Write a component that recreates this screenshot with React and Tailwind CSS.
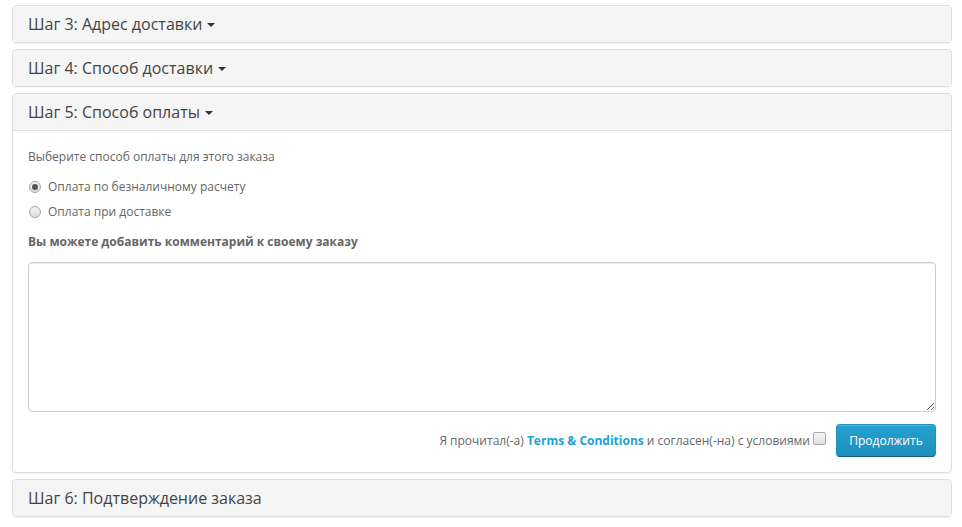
import React from 'react';

const Caret = () => (
  <span className="inline-block ml-[5px] align-middle w-0 h-0 border-t-[4px] border-t-[#333] border-x-[4px] border-x-transparent relative top-[-1px]" />
);

const PanelHead = ({ title, caret = true }) => (
  <div className="h-[36px] bg-[#f5f5f5] px-[15px] flex items-center rounded-t-[4px]">
    <h4 className="text-[16px] text-[#444] leading-[18px]">
      {title}
      {caret && <Caret />}
    </h4>
  </div>
);

const Radio = ({ checked, label }) => (
  <label className="flex items-center h-[20px] gap-[7px] pl-[1px]">
    <span className="w-[12px] h-[12px] rounded-full border border-[#a9a9a9] bg-gradient-to-b from-[#f4f4f4] to-[#dcdcdc] flex items-center justify-center">
      {checked && <span className="w-[6px] h-[6px] rounded-full bg-[#555]" />}
    </span>
    <span>{label}</span>
  </label>
);

export default function App() {
  return (
    <div className="w-[962px] h-[527px] bg-white pt-[5px] px-[12px] text-[12px] text-[#666] leading-[20px]" style={{ fontFamily: '"Open Sans", "Noto Sans", sans-serif' }}>
      <div className="w-[940px] flex flex-col gap-[6px]">
        <div className="border border-[#ddd] rounded-[4px] shadow-[0_1px_1px_rgba(0,0,0,0.05)]">
          <PanelHead title="Шаг 3: Адрес доставки" />
        </div>
        <div className="border border-[#ddd] rounded-[4px] shadow-[0_1px_1px_rgba(0,0,0,0.05)]">
          <PanelHead title="Шаг 4: Способ доставки" />
        </div>
        <div className="border border-[#ddd] rounded-[4px] shadow-[0_1px_1px_rgba(0,0,0,0.05)]">
          <div className="border-b border-[#ddd]">
            <PanelHead title="Шаг 5: Способ оплаты" />
          </div>
          <div className="px-[15px] pt-[16px] pb-[15px]">
            <p className="mb-[10px]">Выберите способ оплаты для этого заказа</p>
            <div className="mt-[10px] mb-[5px]">
              <Radio checked label="Оплата по безналичному расчету" />
            </div>
            <div className="mb-[10px]">
              <Radio label="Оплата при доставке" />
            </div>
            <p className="mb-[10px]"><strong className="font-bold">Вы можете добавить комментарий к своему заказу</strong></p>
            <textarea className="block w-full h-[150px] border border-[#ccc] rounded-[4px] shadow-[inset_0_1px_1px_rgba(0,0,0,0.075)] px-[12px] py-[6px] outline-none" />
            <div className="mt-[12px] flex justify-end items-center">
              <div className="flex items-center">
                <span>Я прочитал(-а) <a className="text-[#23a1d1] font-bold">Terms &amp; Conditions</a> и согласен(-на) с условиями</span>
                <span className="ml-[3px] w-[13px] h-[13px] rounded-[2px] border border-[#a9a9a9] bg-gradient-to-b from-[#f6f6f6] to-[#dedede] relative top-[-2px]" />
              </div>
              <button className="ml-[10px] w-[100px] h-[33px] rounded-[4px] text-white text-[12px] bg-gradient-to-b from-[#23a1d1] to-[#1f90bb] border border-[#1f90bb] border-b-[#145e7a] shadow-[inset_0_1px_0_rgba(255,255,255,0.2),0_1px_2px_rgba(0,0,0,0.05)]">
                Продолжить
              </button>
            </div>
          </div>
        </div>
        <div className="border border-[#ddd] rounded-[4px] shadow-[0_1px_1px_rgba(0,0,0,0.05)]">
          <PanelHead title="Шаг 6: Подтверждение заказа" caret={false} />
        </div>
      </div>
    </div>
  );
}
